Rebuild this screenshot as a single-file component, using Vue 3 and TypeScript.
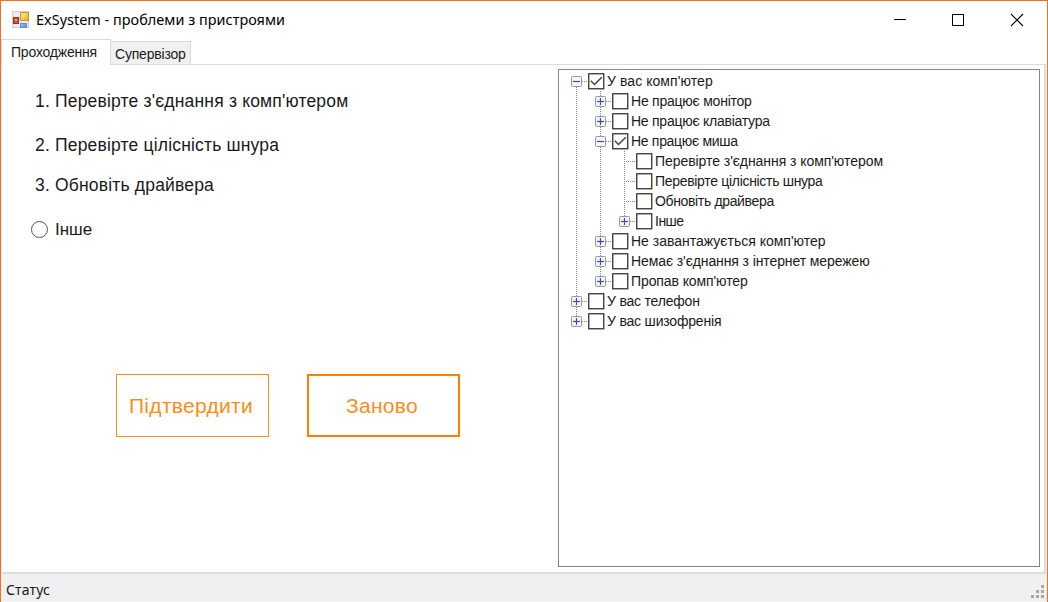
<script setup lang="ts">
import { ref } from 'vue'

interface TreeRow {
  label: string
  level: number
  toggle?: 'plus' | 'minus'
  checked?: boolean
  spacing: number
  first?: boolean
  last?: boolean
}

const steps = [
  { label: "1. Перевірте з'єднання з комп'ютером", height: 44 },
  { label: '2. Перевірте цілісність шнура', height: 40 },
  { label: '3. Обновіть драйвера', height: 44 },
]

const rows = ref<TreeRow[]>([
  { label: "У вас комп'ютер", level: 0, toggle: 'minus', checked: true, spacing: 0.07, first: true },
  { label: 'Не працює монітор', level: 1, toggle: 'plus', spacing: -0.23 },
  { label: 'Не працює клавіатура', level: 1, toggle: 'plus', spacing: -0.25 },
  { label: 'Не працює миша', level: 1, toggle: 'minus', checked: true, spacing: -0.31 },
  { label: "Перевірте з'єднання з комп'ютером", level: 2, spacing: -0.06 },
  { label: 'Перевірте цілісність шнура', level: 2, spacing: -0.31 },
  { label: 'Обновіть драйвера', level: 2, spacing: -0.35 },
  { label: 'Інше', level: 2, toggle: 'plus', spacing: -0.5, last: true },
  { label: "Не завантажується комп'ютер", level: 1, toggle: 'plus', spacing: 0 },
  { label: "Немає з'єднання з інтернет мережею", level: 1, toggle: 'plus', spacing: -0.1 },
  { label: "Пропав комп'ютер", level: 1, toggle: 'plus', spacing: -0.1, last: true },
  { label: 'У вас телефон', level: 0, toggle: 'plus', spacing: -0.2 },
  { label: 'У вас шизофренія', level: 0, toggle: 'plus', spacing: -0.19, last: true },
])
</script>

<template>
  <div class="window">
    <header class="titlebar">
      <svg class="app-icon" width="18" height="18" viewBox="0 0 18 18">
        <defs>
          <linearGradient id="gold" x1="0" y1="0" x2="1" y2="1">
            <stop offset="0" stop-color="#fff0a0" />
            <stop offset="0.5" stop-color="#fbd04a" />
            <stop offset="1" stop-color="#dfa51c" />
          </linearGradient>
          <linearGradient id="blue" x1="0" y1="0" x2="1" y2="1">
            <stop offset="0" stop-color="#9cc8ff" />
            <stop offset="1" stop-color="#4a86e6" />
          </linearGradient>
        </defs>
        <rect x="0.5" y="0.5" width="16" height="16" fill="#ececec" stroke="#cfcfcf" />
        <rect x="1.500" y="6.500" width="5" height="6" fill="#d04a40" stroke="#ad2a28" />
        <rect x="3" y="8" width="2" height="2" fill="#ed9a90" />
        <rect x="8.500" y="1.500" width="8" height="8" fill="url(#gold)" stroke="#c9982c" />
        <rect x="8.500" y="12.500" width="6" height="4" fill="url(#blue)" stroke="#5d90dc" />
      </svg>
      <span class="title">ExSystem - проблеми з пристроями</span>
      <svg class="controls" width="130" height="14" viewBox="0 0 130 14">
        <path d="M0 6.500H12" stroke="#000" fill="none" />
        <rect x="58.500" y="1.500" width="11" height="11" stroke="#000" fill="none" />
        <path d="M117 1L129 13M129 1L117 13" stroke="#000" stroke-width="1.100" fill="none" />
      </svg>
    </header>

    <nav class="tabs">
      <div class="tab active"><span>Проходження</span></div>
      <div class="tab second"><span>Супервізор</span></div>
    </nav>

    <main class="page">
      <section class="left">
        <div v-for="s in steps" :key="s.label" class="step" :style="{ height: s.height + 'px' }">{{ s.label }}</div>
        <label class="radio"><i class="circle"></i><span>Інше</span></label>
        <div class="buttons">
          <button class="btn">Підтвердити</button>
          <button class="btn focused">Заново</button>
        </div>
      </section>

      <section class="tree">
        <div v-for="row in rows" :key="row.label" class="row">
          <i v-for="n in row.level" :key="n" class="cell guide"></i>
          <i class="cell guide branch" :class="{ first: row.first, last: row.last }">
            <svg v-if="row.toggle" class="toggle" width="11" height="11" viewBox="0 0 11 11">
              <rect x="0.5" y="0.5" width="10" height="10" rx="1" fill="#f5f5f5" stroke="#979797" />
              <path d="M2 5.500H9" stroke="#3450b0" stroke-width="1.200" />
              <path v-if="row.toggle === 'plus'" d="M5.500 2V9" stroke="#3450b0" stroke-width="1.200" />
            </svg>
          </i>
          <svg class="check" width="17" height="17" viewBox="0 0 17 17">
            <rect x="0.750" y="0.750" width="15" height="15" fill="#fff" stroke="#333" stroke-width="1.300" />
            <path v-if="row.checked" d="M2.800 7.800L6.500 11.500L13.800 4.200" fill="none" stroke="#444" stroke-width="1.500" />
          </svg>
          <span class="label" :style="{ letterSpacing: row.spacing + 'px' }">{{ row.label }}</span>
        </div>
      </section>
    </main>

    <footer class="status">
      <span>Статус</span>
      <svg class="grip" width="13" height="13" viewBox="0 0 13 13" fill="#a8a8a8">
        <rect x="10" y="0" width="3" height="3" />
        <rect x="5" y="5" width="3" height="3" />
        <rect x="10" y="5" width="3" height="3" />
        <rect x="0" y="10" width="3" height="3" />
        <rect x="5" y="10" width="3" height="3" />
        <rect x="10" y="10" width="3" height="3" />
      </svg>
    </footer>
  </div>
</template>

<style>
body {
  margin: 0;
  overflow: hidden;
}
</style>

<style scoped>
.window {
  box-sizing: border-box;
  width: 1048px;
  height: 602px;
  border: 1px solid #f96f1e;
  border-bottom: 0;
  display: flex;
  flex-direction: column;
  background: #fff;
  color: #1a1a1a;
  font-family: "Liberation Sans", Arial, sans-serif;
  white-space: nowrap;
}
.titlebar {
  height: 38px;
  flex: none;
  display: flex;
  align-items: center;
  padding-left: 11px;
}
.app-icon {
  flex: none;
}
.title {
  font: 14.400px/20px "Noto Sans", sans-serif;
  letter-spacing: 0.040px;
  color: #000;
  margin-left: 6px;
}
.controls {
  margin-left: auto;
  margin-right: 23px;
}
.tabs {
  height: 25px;
  flex: none;
  display: flex;
  align-items: flex-end;
  position: relative;
  z-index: 1;
  font-size: 14px;
  letter-spacing: -0.200px;
}
.tab {
  box-sizing: border-box;
  border: 1px solid #d9d9d9;
  border-bottom: 0;
}
.tab.active {
  width: 110px;
  height: 26px;
  margin-bottom: -1px;
  background: #fff;
  padding-left: 9px;
  line-height: 24px;
}
.tab.second {
  width: 80px;
  height: 23px;
  background: #f0f0f0;
  border-left: 0;
  padding-left: 4px;
  line-height: 24px;
}
.page {
  box-sizing: border-box;
  height: 509px;
  flex: none;
  display: flex;
  justify-content: space-between;
  border: 1px solid #dcdcdc;
  border-left-color: #f3f3f3;
  border-right-width: 2px;
  margin-right: 1px;
  padding: 4px 4px 5px 0;
}
.left {
  padding: 10px 0 0 29px;
}
.step {
  padding-left: 4px;
  font-size: 17.500px;
  letter-spacing: 0.180px;
  line-height: 44px;
}
.radio {
  display: flex;
  align-items: center;
  height: 44px;
  font-size: 17px;
}
.radio span {
  padding-top: 1px;
}
.circle {
  box-sizing: border-box;
  width: 17px;
  height: 17px;
  border: 1.500px solid #555;
  border-radius: 50%;
  margin-right: 7px;
}
.buttons {
  display: flex;
  gap: 38px;
  margin: 123px 0 0 85px;
}
.btn {
  box-sizing: border-box;
  width: 153px;
  height: 63px;
  padding: 0 3px 0 0;
  border: 1px solid #ff8c1a;
  background: #fff;
  color: #ff8c1a;
  font: 21px "Liberation Sans", Arial, sans-serif;
  letter-spacing: 0.300px;
}
.btn.focused {
  border: 2px solid #ff8000;
}
.tree {
  box-sizing: border-box;
  width: 482px;
  height: 498px;
  border: 1px solid #828790;
  padding: 1px 0 0 5px;
}
.row {
  display: flex;
  align-items: center;
  height: 20px;
}
.cell {
  flex: none;
  width: 24px;
  height: 20px;
}
.guide {
  background: repeating-linear-gradient(#888 0 1px, transparent 1px 2px) 12px 0 / 1px 20px no-repeat;
}
.branch {
  display: flex;
  align-items: center;
  padding-left: 7px;
  width: 17px;
  background:
    repeating-linear-gradient(#888 0 1px, transparent 1px 2px) 12px 0 / 1px 20px no-repeat,
    repeating-linear-gradient(90deg, #888 0 1px, transparent 1px 2px) 12px 10px / 12px 1px no-repeat;
}
.branch.first {
  background-position: 12px 10px, 12px 10px;
}
.branch.last {
  background-size: 1px 10px, 12px 1px;
}
.check {
  flex: none;
}
.label {
  margin-left: 2px;
  font-size: 14px;
  line-height: 20px;
}
.status {
  flex: 1;
  display: flex;
  align-items: center;
  justify-content: space-between;
  background: #f0f0f0;
  border-top: 1px solid #e2e2e2;
  border-bottom: 1px solid #f8f8f8;
  padding: 3px 3px 0 5px;
  font: 14px "Noto Sans", sans-serif;
  letter-spacing: 0.150px;
}
.grip {
  margin-top: 5px;
}
</style>
